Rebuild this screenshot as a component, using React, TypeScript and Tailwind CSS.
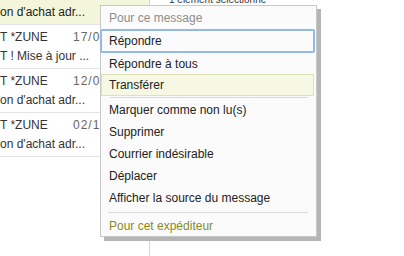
import React from "react";

interface Row {
  name: string;
  date: string;
  subject: string;
}

const rows: Row[] = [
  { name: "T *ZUNE", date: "17/03", subject: "T ! Mise à jour ..." },
  { name: "T *ZUNE", date: "12/03", subject: "on d'achat adr..." },
  { name: "T *ZUNE", date: "02/10", subject: "on d'achat adr..." },
];

const items = ["Marquer comme non lu(s)", "Supprimer", "Courrier indésirable", "Déplacer", "Afficher la source du message"];

export default function App() {
  return (
    <div
      className="relative w-[404px] h-[256px] overflow-hidden bg-white flex text-[12px] text-[#222]"
      style={{ fontFamily: '"Liberation Sans", Arial, sans-serif' }}
    >
      {/* liste des messages */}
      <div className="w-[150px] h-full border-r border-[#d4d4d4] flex flex-col">
        <div className="h-[25px] bg-[#f4f6dc] border-b border-[#e4e4e4] flex items-center whitespace-nowrap overflow-hidden">
          on d'achat adr...
        </div>
        {rows.map((r, i) => (
          <div key={i} className="h-[44px] border-b border-[#e4e4e4] pt-[2px] whitespace-nowrap overflow-hidden">
            <div className="flex h-[19px] items-center">
              <span className="w-[73px] text-[#333]">{r.name}</span>
              <span className="text-[#666] tracking-[1px]">{r.date}</span>
            </div>
            <div className="h-[19px] flex items-center text-[#333]">{r.subject}</div>
          </div>
        ))}
      </div>

      {/* panneau de droite */}
      <div className="flex-1 pl-[19px]">
        <p className="-mt-[5px] text-[10px] leading-[10px] text-[#333] whitespace-nowrap">1 élément sélectionné</p>
      </div>

      {/* menu contextuel */}
      <div className="absolute left-[100px] top-[5px] w-[217px] border border-[#c8c8c8] bg-[#fbfbfb] shadow-[4px_4px_0_#b5b5b5]">
        <div className="h-[23px] pl-[8px] flex items-center text-[#8d8d8d]">Pour ce message</div>
        <div className="h-[24px] -ml-[1px] mr-[1px] pl-[7px] flex items-center border-2 border-[#93b9e8] rounded-[2px]">
          Répondre
        </div>
        <div className="h-[21px] pl-[8px] flex items-center">Répondre à tous</div>
        <div className="h-[22px] mr-[2px] pl-[7px] flex items-center border border-[#dfe2b5] bg-[#f7f8e4]">
          Transférer
        </div>
        <div className="py-[1px] ml-[9px] mr-[8px]">
          <div className="h-px bg-[#d9d9d9]" />
        </div>
        {items.map((t) => (
          <div key={t} className="h-[22px] pl-[8px] flex items-center whitespace-nowrap">
            {t}
          </div>
        ))}
        <div className="py-[3px] ml-[7px] mr-[8px]">
          <div className="h-px bg-[#d9d9d9]" />
        </div>
        <div className="h-[20px] pl-[8px] flex items-center text-[#8a8a1c]">Pour cet expéditeur</div>
      </div>
    </div>
  );
}
